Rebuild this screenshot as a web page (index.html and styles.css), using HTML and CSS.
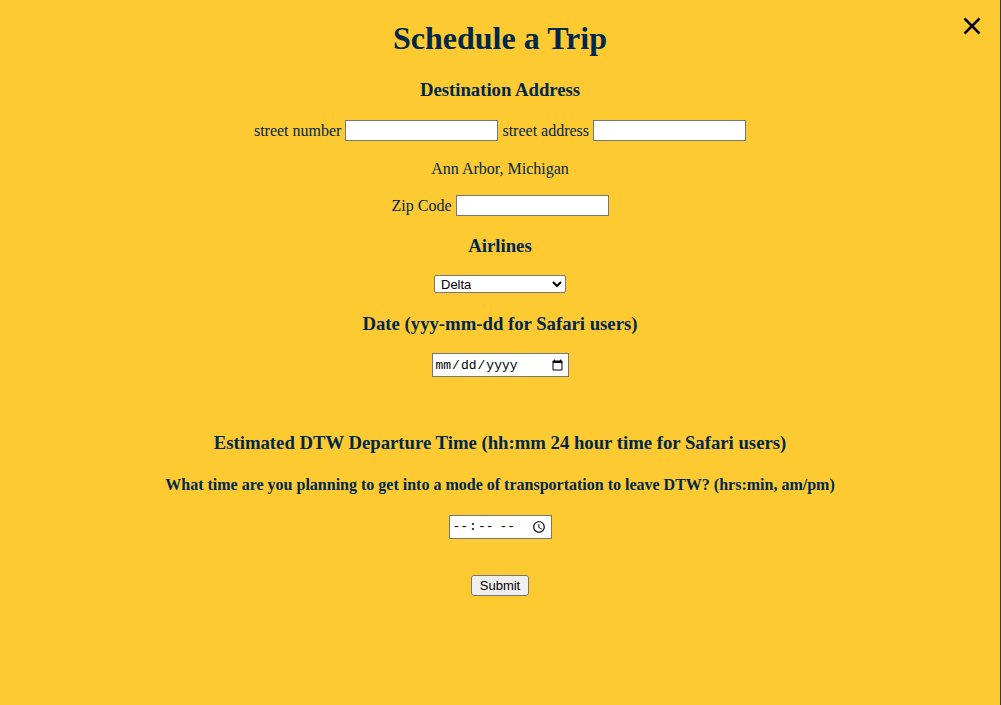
FILE: index.html
```html
<!DOCTYPE html>
<html lang="en">
<head>
<meta charset="utf-8">
<title>Schedule a Trip</title>
<link rel="stylesheet" href="styles.css">
</head>
<body>
<div class="modal">
  <button class="close" type="button" aria-label="Close">
    <svg width="18" height="18" viewBox="0 0 18 18"><path d="M1.5 1.5 L16.5 16.5 M16.5 1.5 L1.5 16.5" stroke="#000" stroke-width="2.5" stroke-linecap="butt" fill="none"/></svg>
  </button>
  <form class="trip-form">
    <h1 class="title">Schedule a Trip</h1>
    <h3 class="section">Destination Address</h3>
    <p class="row">street number <input class="text-in" type="text"> street address <input class="text-in" type="text"></p>
    <p class="row text">Ann Arbor, Michigan</p>
    <p class="row">Zip Code <input class="text-in" type="text"></p>
    <h3 class="section">Airlines</h3>
    <select class="airline">
      <option>Delta</option>
      <option>American</option>
      <option>United</option>
    </select>
    <h3 class="section">Date (yyy-mm-dd for Safari users)</h3>
    <input class="date-in" type="date" value="">
    <h3 class="section departure">Estimated DTW Departure Time (hh:mm 24 hour time for Safari users)</h3>
    <h4 class="question">What time are you planning to get into a mode of transportation to leave DTW? (hrs:min, am/pm)</h4>
    <input class="time-in" type="time">
    <div class="submit-row"><button class="submit" type="button">Submit</button></div>
  </form>
</div>
</body>
</html>
```

FILE: styles.css
```css
html, body {
  margin: 0;
  padding: 0;
  height: 100%;
}
body {
  background: #fdca31;
  font-family: "Liberation Serif", "Times New Roman", serif;
  color: #00274c;
}
.modal {
  position: relative;
  box-sizing: border-box;
  min-height: 100%;
  background: #fdca31;
  border-right: 1px solid #3a3a3a;
}
.close {
  position: absolute;
  top: 17px;
  right: 19px;
  width: 18px;
  height: 18px;
  padding: 0;
  border: 0;
  background: transparent;
  cursor: pointer;
  display: block;
}
.close svg { display: block; }
.trip-form {
  display: flex;
  flex-direction: column;
  align-items: center;
  text-align: center;
  padding-top: 1px;
}
.title {
  font-size: 32px;
  font-weight: bold;
  margin: 19px 0 22px;
  line-height: 37px;
}
.section {
  font-size: 18.72px;
  font-weight: bold;
  line-height: 22px;
  margin: 0 0 19px;
}
.row {
  display: flex;
  align-items: center;
  justify-content: center;
  gap: 4px;
  font-size: 16px;
  margin: 0 0 16px;
  line-height: 21px;
}
.row.text {
  line-height: 22px;
  padding-top: 1px;
  margin-bottom: 15px;
}
.row + .section { margin-top: 3px; }
.text-in {
  box-sizing: border-box;
  width: 153px;
  height: 21px;
  border: 1px solid #767676;
  background: #fff;
  margin: 0;
  padding: 1px 2px;
}
.airline {
  box-sizing: border-box;
  width: 132px;
  height: 18px;
  font-family: "Liberation Sans", Arial, sans-serif;
  font-size: 13px;
  color: #000;
  background: #fff;
  border: 1px solid #767676;
  border-radius: 2px;
  margin: -1px 0 20px;
  padding: 0 2px;
}
.date-in {
  box-sizing: border-box;
  width: 137px;
  height: 24px;
  font-family: "Liberation Mono", monospace;
  font-size: 13px;
  color: #000;
  background: #fff;
  border: 1px solid #767676;
  margin: -1px 0 55px;
  padding: 1px 2px;
}
.question {
  font-size: 16px;
  font-weight: bold;
  line-height: 18px;
  margin: 0 0 21px;
}
.departure { margin-bottom: 22px; }
.time-in {
  box-sizing: border-box;
  width: 103px;
  height: 24px;
  font-family: "Liberation Mono", monospace;
  font-size: 13px;
  color: #000;
  background: #fff;
  border: 1px solid #767676;
  margin: 0 0 36px;
  padding: 1px 2px;
}
.submit {
  box-sizing: border-box;
  width: 58px;
  height: 21px;
  font-family: "Liberation Sans", Arial, sans-serif;
  font-size: 13px;
  color: #000;
  background: #efefef;
  border: 1px solid #767676;
  border-radius: 3px;
  padding: 0;
}
```
